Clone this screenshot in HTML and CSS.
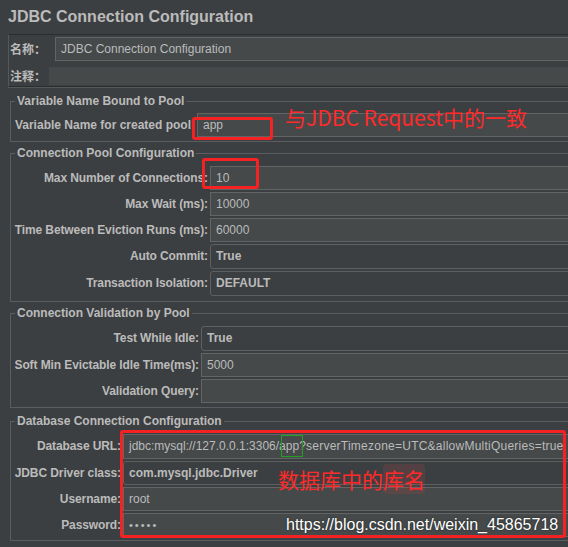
FILE: index.html
```html
<!DOCTYPE html>
<html lang="zh">
<head>
<meta charset="utf-8">
<title>JDBC Connection Configuration</title>
<link rel="stylesheet" href="styles.css">
</head>
<body>
<div class="page">
  <h1 class="title">JDBC Connection Configuration</h1>

  <div class="namepanel">
    <div class="nrow">
      <span class="nlabel name-label">名称：</span>
      <div class="tf name-field">JDBC Connection Configuration</div>
    </div>
    <div class="nrow">
      <span class="nlabel comment-label">注释：</span>
      <div class="comment"></div>
    </div>
  </div>

  <fieldset class="group g1">
    <legend>Variable Name Bound to Pool</legend>
    <div class="form">
      <label class="lbl h24">Variable Name for created pool:</label>
      <div class="tf h24">app</div>
    </div>
  </fieldset>

  <fieldset class="group g2">
    <legend>Connection Pool Configuration</legend>
    <div class="form">
      <label class="lbl h24">Max Number of Connections:</label>
      <div class="tf h24">10</div>
      <label class="lbl h24">Max Wait (ms):</label>
      <div class="tf h24">10000</div>
      <label class="lbl h24">Time Between Eviction Runs (ms):</label>
      <div class="tf h24">60000</div>
      <label class="lbl h25">Auto Commit:</label>
      <div class="combo h25">True</div>
      <label class="lbl h25">Transaction Isolation:</label>
      <div class="combo h25">DEFAULT</div>
    </div>
  </fieldset>

  <fieldset class="group g3">
    <legend>Connection Validation by Pool</legend>
    <div class="form">
      <label class="lbl h25">Test While Idle:</label>
      <div class="combo h25">True</div>
      <label class="lbl h24">Soft Min Evictable Idle Time(ms):</label>
      <div class="tf h24">5000</div>
      <label class="lbl h24">Validation Query:</label>
      <div class="tf h24"></div>
    </div>
  </fieldset>

  <fieldset class="group g4">
    <legend>Database Connection Configuration</legend>
    <div class="form">
      <label class="lbl h25">Database URL:</label>
      <div class="tf h25">jdbc:mysql://127.0.0.1:3306/app<span class="url-tail">?serverTimezone=UTC&amp;allowMultiQueries=true</span></div>
      <label class="lbl h24">JDBC Driver class:</label>
      <div class="combo h24">com.mysql.jdbc.Driver</div>
      <label class="lbl h24">Username:</label>
      <div class="tf h24">root</div>
      <label class="lbl h24">Password:</label>
      <div class="tf h24 pwd">•••••</div>
    </div>
  </fieldset>

  <div class="mark box-pool"></div>
  <div class="mark box-conn"></div>
  <div class="mark box-db"></div>
  <div class="mark-green box-app"></div>
  <div class="note note-pool">与JDBC Request中的一致</div>
  <div class="note note-db">数据库中的<span class="smudge">库名</span></div>
  <div class="watermark">https://blog.csdn.net/weixin_45865718</div>
</div>
</body>
</html>
```
FILE: styles.css
```css
html, body {
  margin: 0;
  padding: 0;
  background: #3c3f41;
  overflow: hidden;
}

.page {
  position: relative;
  width: 600px;
  height: 547px;
  font-family: "Liberation Sans", "Noto Sans CJK SC", Arial, sans-serif;
  font-size: 12px;
  font-weight: bold;
  color: #bbbbbb;
}

.title {
  margin: 0;
  height: 34px;
  box-sizing: border-box;
  padding: 8px 8px 0;
  font-size: 16px;
  line-height: 18px;
  font-weight: bold;
  color: #bbbbbb;
}

/* name / comment panel */
.namepanel {
  margin-left: 8px;
  border-top: 1px solid #2b2d2e;
  border-left: 1px solid #555859;
  border-bottom: 1px solid #2b2d2e;
  box-shadow: 0 1px 0 #55585a;
  padding: 2px 0 1px 1px;
  display: flex;
  flex-direction: column;
  gap: 6px;
}

.nrow {
  display: flex;
  align-items: center;
}

.nlabel {
  font-family: "Noto Sans CJK SC", "Liberation Sans", sans-serif;
  font-weight: bold;
  font-size: 12px;
  line-height: 18px;
  flex: none;
}

.name-label { width: 45px; }
.comment-label { width: 39px; }

.name-field {
  flex: 1;
  height: 24px;
}

.comment {
  flex: 1;
  height: 18px;
  background: #45494a;
}

/* titled groups */
.group {
  margin: 0 0 0 10px;
  padding: 6px 0 3px 4px;
  border: 1px solid #5b5e60;
  min-width: 0;
}

.group legend {
  margin-left: 0;
  padding: 0 2px;
  font-size: 12px;
  line-height: 14px;
  font-weight: bold;
  color: #bbbbbb;
}

.g1 { margin-top: 7px; padding-top: 5px; padding-bottom: 4px; }
.g2 { margin-top: 4px; padding-bottom: 5px; }
.g3 { margin-top: 4px; padding-bottom: 4px; }
.g4 { margin-top: 6px; padding-bottom: 3px; }

.form {
  display: grid;
  grid-template-columns: 180px 1fr;
  column-gap: 2px;
  row-gap: 2px;
}

.g2 .form { grid-template-columns: 193px 1fr; }
.g3 .form { grid-template-columns: 184px 1fr; }
.g4 .form { grid-template-columns: 106px 1fr; }

.lbl {
  display: flex;
  justify-content: flex-end;
  white-space: nowrap;
  letter-spacing: -0.1px;
}

.g1 .lbl { letter-spacing: 0; }

.h24 { height: 24px; line-height: 24px; }
.h25 { height: 25px; line-height: 25px; }

.tf, .combo {
  box-sizing: border-box;
  padding-left: 5px;
  white-space: nowrap;
  overflow: hidden;
}

.tf {
  background: #45494a;
  border: 1px solid #646464;
  font-weight: normal;
  line-height: 22px;
}

.tf.h25 { line-height: 23px; }

.url-tail { letter-spacing: 0.24px; }

.combo {
  background: #3c3f41;
  border: 1px solid #5e6060;
  border-radius: 3px;
  font-weight: bold;
  line-height: 22px;
}

.combo.h25 { line-height: 23px; }

.name-field { line-height: 22px; }

.pwd {
  letter-spacing: 2px;
  font-size: 11px;
}

/* annotations drawn on top of the screenshot */
.mark {
  position: absolute;
  border: 3px solid #f42222;
  border-radius: 3px;
  box-sizing: border-box;
}

.box-pool { left: 192px; top: 117px; width: 81px; height: 23px; }
.box-conn { left: 202px; top: 158px; width: 57px; height: 31px; }
.box-db { left: 120px; top: 430px; width: 446px; height: 108px; }

.mark-green {
  position: absolute;
  border: 1px solid #22a022;
  box-sizing: border-box;
}

.box-app { left: 281px; top: 435px; width: 22px; height: 22px; }

.note {
  position: absolute;
  font-family: "Noto Sans CJK SC", "Liberation Sans", sans-serif;
  font-weight: normal;
  color: #ff2a2a;
  font-size: 21px;
  line-height: 24px;
  white-space: nowrap;
}

.note-pool { left: 285px; top: 105px; }
.note-db { left: 278px; top: 467px; }

.smudge {
  background: rgba(190, 70, 70, 0.18);
  border-radius: 4px;
}

.watermark {
  position: absolute;
  left: 286px;
  top: 514px;
  font-family: "Liberation Sans", Arial, sans-serif;
  font-weight: normal;
  font-size: 16px;
  line-height: 22px;
  color: #ffffff;
  text-shadow: 0 0 2px rgba(0, 0, 0, 0.6);
  white-space: nowrap;
}
```
